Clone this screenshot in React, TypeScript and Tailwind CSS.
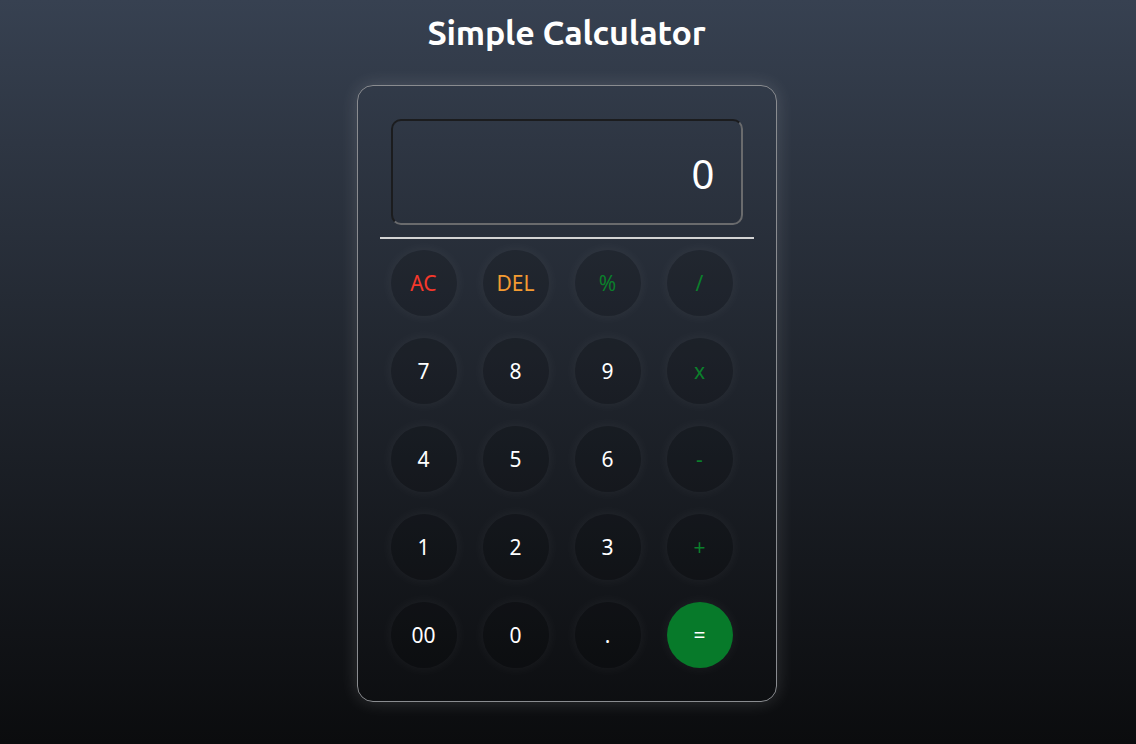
import React from 'react';

type Key = {
  label: string;
  color: string;
  bg?: string;
};

const keys: Key[] = [
  { label: 'AC', color: 'text-[#f5382b]' },
  { label: 'DEL', color: 'text-[#f39b32]' },
  { label: '%', color: 'text-[#0b7f2b]' },
  { label: '/', color: 'text-[#0b7f2b]' },
  { label: '7', color: 'text-white' },
  { label: '8', color: 'text-white' },
  { label: '9', color: 'text-white' },
  { label: 'x', color: 'text-[#0b7f2b]' },
  { label: '4', color: 'text-white' },
  { label: '5', color: 'text-white' },
  { label: '6', color: 'text-white' },
  { label: '-', color: 'text-[#0b7f2b]' },
  { label: '1', color: 'text-white' },
  { label: '2', color: 'text-white' },
  { label: '3', color: 'text-white' },
  { label: '+', color: 'text-[#0b7f2b]' },
  { label: '00', color: 'text-white' },
  { label: '0', color: 'text-white' },
  { label: '.', color: 'text-white' },
  { label: '=', color: 'text-white', bg: 'bg-[#077a2a]' },
];

const App = () => {
  return (
    <div className="min-h-screen w-full bg-linear-to-b from-[#374151] to-[#0b0c0e] flex flex-col items-center font-['Noto_Sans',sans-serif]">
      <h1 className="h-[64px] flex items-center text-[34px] font-semibold text-white font-['Ubuntu','Noto_Sans',sans-serif] tracking-[-0.2px] mr-[3px]">
        Simple Calculator
      </h1>
      <div className="mt-[21px] mr-[3px] w-[420px] h-[617px] rounded-2xl border border-[#8a8c90] shadow-[0_0_18px_rgba(255,255,255,0.14)] px-[22px] pt-[33px]">
        <div className="mx-[11px] h-[106px] rounded-[10px] border-2 border-t-[#1b1c1e] border-l-[#1b1c1e] border-r-[#6a6b6d] border-b-[#6a6b6d] flex items-center justify-end pr-[26px]">
          <span className="text-[40px] text-white leading-none mt-[4px]">0</span>
        </div>
        <div className="mt-[12px] h-[2px] bg-[#d4d4d4]" />
        <div className="mt-[11px] pl-[11px] grid grid-cols-[repeat(4,66px)] gap-x-[26px] gap-y-[22px]">
          {keys.map((k) => (
            <button
              key={k.label}
              className={`w-[66px] h-[66px] rounded-full flex items-center justify-center pt-[2px] text-[21px] shadow-[0_0_14px_rgba(255,255,255,0.06)] ${k.bg ? k.bg : 'bg-black/15'} ${k.color}`}
            >
              {k.label}
            </button>
          ))}
        </div>
      </div>
    </div>
  );
};

export default App;
